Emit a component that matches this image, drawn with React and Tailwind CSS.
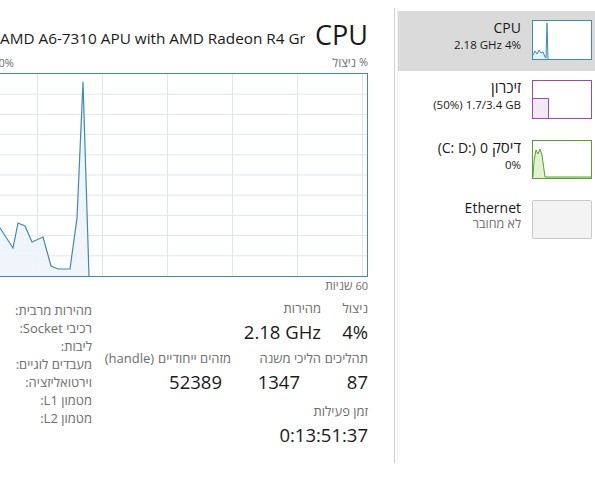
import React from "react";

const GRID_Y = [1, 2, 3, 4, 5, 6, 7, 8, 9].map((i) => i * 20.2);
const GRID_X = [37, 102, 167, 232, 297, 362];
const CPU_PTS = [
  [-5, 145], [0, 154], [13, 174], [18, 149], [25, 152], [32, 168], [43, 163],
  [51, 192], [58, 195], [70, 195], [77, 144], [83, 8], [89, 202],
];

function MainChart() {
  const line = CPU_PTS.map((p) => p.join(",")).join(" ");
  const area = line + " 89,202 -5,202";
  return (
    <div className="w-[368px] h-[204px] border-t border-r border-b border-[#3f8ab2] bg-white">
      <svg width="367" height="202" viewBox="0 0 367 202" className="block">
        {GRID_Y.map((y) => (
          <line key={"h" + y} x1="0" x2="367" y1={y} y2={y} stroke="#dce7ee" strokeWidth="1" />
        ))}
        {GRID_X.map((x) => (
          <line key={"v" + x} x1={x + 0.5} x2={x + 0.5} y1="0" y2="202" stroke="#dce7ee" strokeWidth="1" />
        ))}
        <polygon points={area} fill="#edf4f9" fillOpacity="0.9" />
        <polyline points={line} fill="none" stroke="#3f8ab2" strokeWidth="1.2" />
      </svg>
    </div>
  );
}

function MiniCpu() {
  const pts = [[0, 34], [2, 30], [4, 33], [6, 29], [8, 32], [10, 31], [12, 36], [13, 37], [14, 2], [15, 38]];
  const line = pts.map((p) => p.join(",")).join(" ");
  return (
    <div className="w-[60px] h-[40px] border border-[#3f8ab2] bg-white">
      <svg width="58" height="38" viewBox="0 0 58 38" className="block">
        <polygon points={line + " 15,38 0,38"} fill="#e6f0f7" />
        <polyline points={line} fill="none" stroke="#3f8ab2" strokeWidth="1" />
      </svg>
    </div>
  );
}

function MiniMem() {
  return (
    <div className="w-[60px] h-[39px] border border-[#9b4aa6] bg-white">
      <svg width="58" height="37" viewBox="0 0 58 37" className="block">
        <rect x="0" y="17" width="15" height="20" fill="#f4e8f6" />
        <polyline points="0,17.5 15.5,17.5 15.5,37" fill="none" stroke="#9b4aa6" strokeWidth="1" />
      </svg>
    </div>
  );
}

function MiniDisk() {
  const pts = [[0, 36], [1, 20], [3, 9], [5, 13], [7, 8], [9, 14], [12, 36], [58, 36]];
  const line = pts.map((p) => p.join(",")).join(" ");
  return (
    <div className="w-[60px] h-[39px] border border-[#5aa02c] bg-white">
      <svg width="58" height="37" viewBox="0 0 58 37" className="block">
        <polygon points={line + " 58,37 0,37"} fill="#e2f2d5" />
        <polyline points={line} fill="none" stroke="#5aa02c" strokeWidth="1" />
      </svg>
    </div>
  );
}

function MiniEth() {
  return <div className="w-[60px] h-[39px] border border-[#cacaca] bg-[#f3f3f3] rounded-[2px]" />;
}

function SideItem({ title, sub, subGray, selected, thumb }) {
  return (
    <div className={"h-[60px] flex justify-end " + (selected ? "bg-[#dadada]" : "")}>
      <div className="pt-[6px] flex flex-col items-end">
        <div className="h-[20px] flex items-center text-[14px] text-[#1a1a1a] whitespace-nowrap">{title}</div>
        <div className={"h-[15px] flex items-center text-[11.5px] whitespace-nowrap " + (subGray ? "text-[#707070]" : "text-[#1a1a1a]")}>{sub}</div>
      </div>
      <div className="ml-[11px] mr-[3px] pt-[9px]">{thumb}</div>
    </div>
  );
}

function Stat({ label, value, w, vpr }) {
  return (
    <div className={"flex flex-col items-end " + w}>
      <div className="h-[20px] flex items-center gap-[4px] text-[13px] text-[#6d6d6d] whitespace-nowrap">{label}</div>
      <div className={"text-[18.5px] leading-[26px] text-[#1a1a1a] whitespace-nowrap " + vpr}>{value}</div>
    </div>
  );
}

const HE = "text-[15px]";

export default function App() {
  const labels = ["מהירות מרבית:", "רכיבי Socket:", "ליבות:", "מעבדים לוגיים:", "וירטואליזציה:", "מטמון L1:", "מטמון L2:"];
  return (
    <div className="w-[595px] h-[481px] bg-white flex overflow-hidden font-['Segoe_UI','Open_Sans','Noto_Sans_Hebrew','DejaVu_Sans',sans-serif] text-[#1a1a1a]">
      {/* left panel */}
      <div className="w-[394px] shrink-0 flex flex-col pr-[26px]">
        <div className="h-[53px] flex items-end justify-between">
          <div className="w-[305px] overflow-hidden whitespace-nowrap text-[15.3px] leading-[24px] pb-[3px]">
            AMD A6-7310 APU with AMD Radeon R4 Gr
          </div>
          <div className="text-[27px] leading-[36px]">CPU</div>
        </div>
        <div className="h-[20px] flex items-center justify-between text-[11px] text-[#6d6d6d]">
          <span className="-ml-[14px]">100%</span>
          <span className="flex gap-[3px]">
            <span className="text-[12px]">ניצול</span>
            <span>%</span>
          </span>
        </div>
        <MainChart />
        <div className="h-[18px] flex items-center justify-end gap-[3px] text-[11px] text-[#6d6d6d]">
          <span className="text-[12px]">שניות</span>
          <span>60</span>
        </div>
        <div className="flex justify-between mt-[4px]">
          <div className="flex flex-col items-end w-[92px] pt-[2px]">
            {labels.map((l) => (
              <div key={l} dir="rtl" className="text-[13px] leading-[18px] text-[#6d6d6d] whitespace-nowrap">{l}</div>
            ))}
          </div>
          <div className="flex flex-col items-end">
            <div className="flex flex-row-reverse">
              <Stat label="ניצול" value="4%" w="w-[47px]" vpr="" />
              <Stat label="מהירות" value="2.18 GHz" w="w-[90px]" vpr="" />
            </div>
            <div className="flex flex-row-reverse mt-[4px]">
              <Stat label="תהליכים" value="87" w="w-[47px]" vpr="" />
              <Stat label="הליכי משנה" value="1347" w="w-[90px]" vpr="pr-[21px]" />
              <Stat
                label={<><span>(handle)</span><span>מזהים ייחודיים</span></>}
                value="52389"
                w=""
                vpr="pr-[9px]"
              />
            </div>
            <div className="flex flex-row-reverse mt-[7px]">
              <Stat label="זמן פעילות" value="0:13:51:37" w="" vpr="" />
            </div>
          </div>
        </div>
      </div>
      {/* separator */}
      <div className="w-px h-[455px] mt-[8px] bg-[#cfcfcf] shrink-0" />
      <div className="w-[2px] h-[455px] mt-[8px] shrink-0" />
      <div className="w-px h-[455px] mt-[8px] bg-[#f0f0f0] shrink-0" />
      {/* sidebar */}
      <div className="flex-1 pt-[11px]">
        <SideItem selected title="CPU" sub="2.18 GHz 4%" thumb={<MiniCpu />} />
        <SideItem title={<span className={HE}>זיכרון</span>} sub="(50%) 1.7/3.4 GB" thumb={<MiniMem />} />
        <SideItem
          title={
            <span className="flex items-center gap-[4px]">
              <span>(C: D:)</span>
              <span>0</span>
              <span className={HE}>דיסק</span>
            </span>
          }
          sub="0%"
          thumb={<MiniDisk />}
        />
        <SideItem title="Ethernet" sub={<span className="text-[12.5px]">לא מחובר</span>} subGray thumb={<MiniEth />} />
      </div>
    </div>
  );
}
